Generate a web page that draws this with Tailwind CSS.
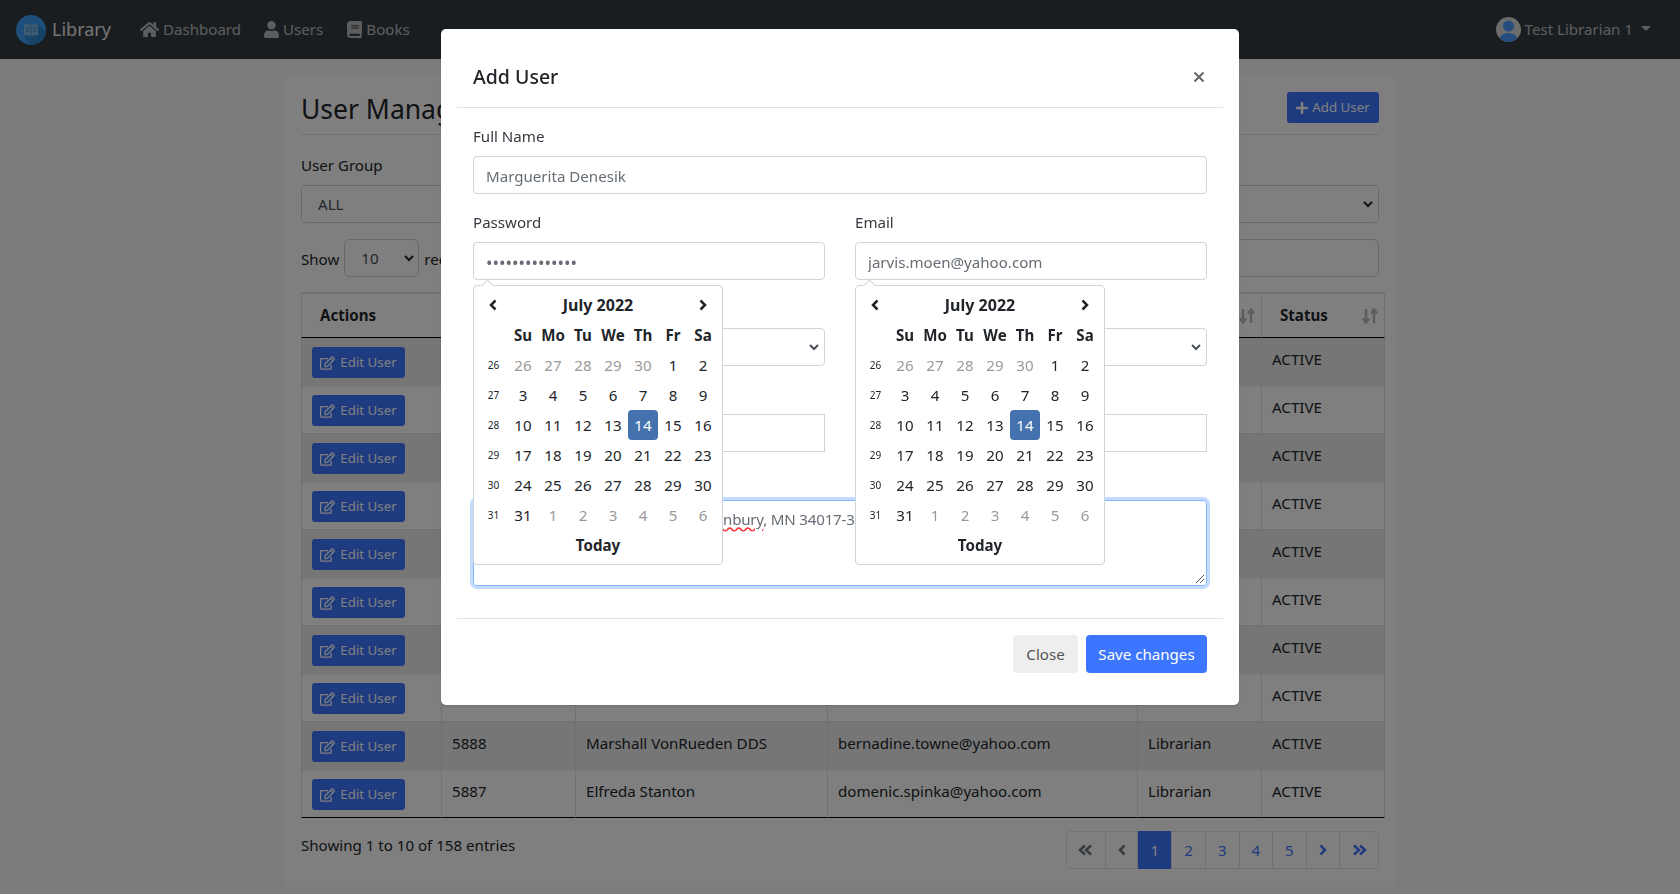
<!DOCTYPE html>
<html lang="en">
<head>
  <meta charset="UTF-8" />
  <title>Library - User Management</title>
  <meta name="viewport" content="width=device-width, initial-scale=1" />
  <script src="https://cdn.jsdelivr.net/npm/@tailwindcss/browser@4"></script>
</head>
<body class="h-screen overflow-hidden bg-[#f8f9fa] text-[#212529] font-['Noto_Sans',sans-serif] text-[15.1px]">

  <!-- navbar -->
  <nav class="h-[59px] bg-[#343a40] flex items-center pl-4 pr-[29px]">
    <svg class="w-[30px] h-[30px]" viewBox="0 0 30 30">
      <defs><clipPath id="logoClip"><circle cx="15" cy="15" r="15"/></clipPath></defs>
      <circle cx="15" cy="15" r="15" fill="#3a9ff5"/>
      <polygon points="8,21 22,9 34,20 24,34 18,34" fill="#2f86d2" clip-path="url(#logoClip)"/>
      <path d="M8 9.500c2.500-.6 5-.4 7 1 2-1.400 4.500-1.600 7-1v11c-2.500-.6-5-.4-7 1-2-1.400-4.500-1.600-7-1z" fill="#7fb8e8"/>
      <path d="M15 10.500v11M10 12.500h3M10 14.500h3M10 16.500h3M17 12.500h3M17 14.500h3M17 16.500h3" stroke="#3a7fc0" stroke-width="0.8"/>
    </svg>
    <span class="ml-[6px] text-[18px] text-white/90">Library</span>
    <a class="ml-[29px] flex items-center text-white/65">
      <svg class="w-[19px] h-[17px] fill-current" viewBox="0 0 576 512"><path d="M280.37 148.26L96 300.11V464a16 16 0 0 0 16 16l112.06-.29a16 16 0 0 0 15.92-16V368a16 16 0 0 1 16-16h64a16 16 0 0 1 16 16v95.64a16 16 0 0 0 16 16.05L464 480a16 16 0 0 0 16-16V300L295.67 148.26a12.19 12.19 0 0 0-15.3 0zM571.6 251.47L488 182.56V44.05a12 12 0 0 0-12-12h-56a12 12 0 0 0-12 12v72.61L318.47 43a48 48 0 0 0-61 0L4.34 251.47a12 12 0 0 0-1.6 16.9l25.5 31A12 12 0 0 0 45.15 301l235.22-193.74a12.19 12.19 0 0 1 15.3 0L530.9 301a12 12 0 0 0 16.9-1.6l25.5-31a12 12 0 0 0-1.7-16.93z"/></svg>
      <span class="ml-[4px]">Dashboard</span>
    </a>
    <a class="ml-[23px] flex items-center text-white/65">
      <svg class="w-[15px] h-[17px] fill-current" viewBox="0 0 448 512"><path d="M224 256c70.700 0 128-57.300 128-128S294.700 0 224 0 96 57.300 96 128s57.300 128 128 128zm89.600 32h-16.700c-22.200 10.200-46.900 16-72.900 16s-50.600-5.800-72.900-16h-16.700C60.200 288 0 348.200 0 422.400V464c0 26.500 21.500 48 48 48h352c26.500 0 48-21.500 48-48v-41.600c0-74.200-60.200-134.400-134.400-134.400z"/></svg>
      <span class="ml-[4px]">Users</span>
    </a>
    <a class="ml-[24px] flex items-center text-white/65">
      <svg class="w-[15px] h-[17px] fill-current" viewBox="0 0 448 512"><path d="M448 360V24c0-13.300-10.700-24-24-24H96C43 0 0 43 0 96v320c0 53 43 96 96 96h328c13.300 0 24-10.700 24-24v-16c0-7.500-3.500-14.300-8.900-18.700-4.200-15.400-4.200-59.300 0-74.700 5.400-4.300 8.900-11.100 8.900-18.600zM128 134c0-3.300 2.700-6 6-6h212c3.300 0 6 2.700 6 6v20c0 3.300-2.700 6-6 6H134c-3.300 0-6-2.700-6-6v-20zm0 64c0-3.300 2.700-6 6-6h212c3.300 0 6 2.700 6 6v20c0 3.300-2.700 6-6 6H134c-3.300 0-6-2.700-6-6v-20zm253.400 250H96c-17.700 0-32-14.300-32-32 0-17.600 14.400-32 32-32h285.400c-1.900 17.100-1.900 46.900 0 64z"/></svg>
      <span class="ml-[4px]">Books</span>
    </a>
    <div class="ml-auto flex items-center text-white/65">
      <svg class="w-[25px] h-[25px]" viewBox="0 0 25 25">
        <defs><clipPath id="avatarClip"><circle cx="12.500" cy="12.500" r="12.500"/></clipPath></defs>
        <circle cx="12.500" cy="12.500" r="12.500" fill="#d8d8d8"/>
        <circle cx="12.500" cy="9" r="5.500" fill="#4a9dff"/>
        <ellipse cx="12.500" cy="21.500" rx="8.500" ry="5.500" fill="#4a9dff" clip-path="url(#avatarClip)"/>
      </svg>
      <span class="ml-[4px]">Test Librarian 1</span>
      <span class="ml-[8px] mb-[3px] w-0 h-0 border-x-[5px] border-x-transparent border-t-[5px] border-t-current"></span>
    </div>
  </nav>

  <!-- page -->
  <main class="pt-[17px]">
    <section class="mx-auto w-[1110px] h-[811px] bg-white rounded-[5px] px-4 pt-4">
      <div class="flex justify-between items-start h-[43px] border-b border-[#dee2e6]">
        <h1 class="text-[26.500px] leading-[34px]">User Management</h1>
        <button class="h-[31px] w-[92px] bg-[#3d76fe] text-white text-[13.300px] rounded-[3px] flex items-center justify-center gap-[4px]">
          <svg class="w-[12px] h-[14px] fill-current" viewBox="0 0 448 512"><path d="M416 208H272V64c0-17.670-14.330-32-32-32h-32c-17.670 0-32 14.330-32 32v144H32c-17.670 0-32 14.330-32 32v32c0 17.670 14.330 32 32 32h144v144c0 17.670 14.330 32 32 32h32c17.670 0 32-14.330 32-32V304h144c17.670 0 32-14.330 32-32v-32c0-17.670-14.330-32-32-32z"/></svg>
          <span class="pt-[1px]">Add User</span>
        </button>
      </div>
      <label class="block mt-[18px] h-[24px] leading-[24px]">User Group</label>
      <div class="mt-[8px] h-[38px] border border-[#ced4da] rounded-[5px] pl-4 pr-[5px] flex items-center justify-between text-[#495057]">
        <span>ALL</span>
        <svg class="w-[10px] h-[8px]" viewBox="0 0 10 8"><path d="M1 2l4 4 4-4" fill="none" stroke="#212529" stroke-width="2"/></svg>
      </div>
      <div class="mt-4 flex items-center h-[38px]">
        <span class="mt-[2px]">Show</span>
        <div class="ml-[5px] w-[75px] h-[38px] border border-[#ced4da] rounded-[5px] pl-[16px] pr-[4px] flex items-center justify-between text-[#495057]">
          <span>10</span>
          <svg class="w-[10px] h-[8px]" viewBox="0 0 10 8"><path d="M1 2l4 4 4-4" fill="none" stroke="#212529" stroke-width="2"/></svg>
        </div>
        <span class="ml-[5px] mt-[2px]">records per page</span>
        <div class="ml-auto w-[300px] h-[38px] border border-[#ced4da] rounded-[5px]"></div>
      </div>

      <table class="mt-[15px] w-[1084px] table-fixed border-separate border-spacing-0">
        <colgroup>
          <col class="w-[141px]"/><col class="w-[134px]"/><col class="w-[252px]"/><col class="w-[310px]"/><col class="w-[124px]"/><col class="w-[123px]"/>
        </colgroup>
        <thead>
          <tr class="h-[46px] font-bold text-left" id="tableHead"></tr>
        </thead>
        <tbody id="tableBody"></tbody>
      </table>

      <div class="mt-[13px] flex justify-between items-start">
        <span class="mt-[2px] leading-[24px]">Showing 1 to 10 of 158 entries</span>
        <div id="pager" class="flex h-[38px] border border-[#dee2e6] rounded-[5px] text-[#3d76fe]"></div>
      </div>
    </section>
  </main>

  <!-- modal -->
  <div class="fixed inset-0 bg-black/50 flex justify-center items-start">
    <div class="mt-[29px] w-[798px] h-[676px] bg-white rounded-[5px] shadow-sm">
      <div class="mx-4 h-[79px] border-b border-[#dee2e6] flex items-center justify-between pl-4 pr-[18px] pt-[17px]">
        <h2 class="text-[19.500px] font-medium text-[#212529]">Add User</h2>
        <svg class="w-[12px] h-[12px]" viewBox="0 0 12 12"><path d="M1.500 1.500l9 9M10.500 1.500l-9 9" stroke="#666" stroke-width="2"/></svg>
      </div>
      <div class="px-8 pt-4 pb-8 grid grid-cols-2 gap-x-[30px] gap-y-4 text-[#343a40]">
        <div class="col-span-2">
          <label class="block mb-2 h-[24px] leading-[24px]">Full Name</label>
          <input class="w-full h-[38px] border border-[#ced4da] rounded-[4px] px-3 pt-[2px] text-[#666d75] outline-none" value="Marguerita Denesik" />
        </div>
        <div class="relative">
          <label class="block mb-2 h-[24px] leading-[24px]">Password</label>
          <input type="password" class="w-full h-[38px] border border-[#ced4da] rounded-[4px] px-3 pt-[2px] text-[17.300px] text-[#666d75] outline-none" value="abcdefghijklmn" />
          <div data-cal></div>
        </div>
        <div class="relative">
          <label class="block mb-2 h-[24px] leading-[24px]">Email</label>
          <input class="w-full h-[38px] border border-[#ced4da] rounded-[4px] px-3 pt-[2px] text-[#666d75] outline-none" value="jarvis.moen@yahoo.com" />
          <div data-cal></div>
        </div>
        <div class="pt-[32px]">
          <div class="h-[38px] border border-[#ced4da] rounded-[4px] pr-[5px] flex items-center justify-end">
            <svg class="w-[10px] h-[8px]" viewBox="0 0 10 8"><path d="M1 2l4 4 4-4" fill="none" stroke="#495057" stroke-width="2"/></svg>
          </div>
        </div>
        <div class="pt-[32px]">
          <div class="h-[38px] border border-[#ced4da] rounded-[4px] pr-[5px] flex items-center justify-end">
            <svg class="w-[10px] h-[8px]" viewBox="0 0 10 8"><path d="M1 2l4 4 4-4" fill="none" stroke="#495057" stroke-width="2"/></svg>
          </div>
        </div>
        <div class="pt-[32px]">
          <div class="h-[38px] border border-[#ced4da]"></div>
        </div>
        <div class="pt-[32px]">
          <div class="h-[38px] border border-[#ced4da]"></div>
        </div>
        <div class="col-span-2 pt-[32px]">
          <div class="relative h-[86px] border border-[#86b7fe] rounded-[4px] ring-[3px] ring-[#0d6efd]/25 pl-[249px] py-[6px] text-[#666d75] leading-[24px] whitespace-nowrap overflow-hidden tracking-[-0.2px]">
            <span class="underline decoration-wavy decoration-red-500">nbury</span>, MN 34017-3
            <svg class="absolute right-[1px] bottom-[1px] w-[10px] h-[10px]" viewBox="0 0 10 10"><path d="M1 9l8-8M5 9l4-4" stroke="#555" stroke-width="1"/></svg>
          </div>
        </div>
      </div>
      <div class="mx-4 border-t border-[#dee2e6] pt-4 px-4 flex justify-end gap-2">
        <button class="h-[38px] w-[65px] bg-[#eeeeee] text-[#555] rounded-[4px]">Close</button>
        <button class="h-[38px] w-[121px] bg-[#3d76fe] text-white rounded-[4px]">Save changes</button>
      </div>
    </div>
  </div>

<script>
// table rows, the middle headers sit behind the modal
const heads = ['Actions', '', '', '', '', 'Status'];
const sortIcon = '<svg class="absolute right-[6px] top-[14px] w-[16px] h-[16px]" viewBox="0 0 16 16"><path d="M4 1v13M1 10.500l3 4 3-4M12 15V2M9 5.500l3-4 3 4" fill="none" stroke="#bbb" stroke-width="2.500"/></svg>';
document.getElementById('tableHead').innerHTML = heads.map((h, i) =>
  '<th class="relative pl-[18px] border-t-2 border-b border-[#dee2e6] border-b-black ' + (i === 0 ? 'border-l ' : '') + 'border-r">' + h + (i > 0 ? sortIcon : '') + '</th>'
).join('');

const rows = [];
for (let i = 0; i < 8; i++) rows.push(['', '', '', '', 'ACTIVE']);
rows.push(['5888', 'Marshall VonRueden DDS', 'bernadine.towne@yahoo.com', 'Librarian', 'ACTIVE']);
rows.push(['5887', 'Elfreda Stanton', 'domenic.spinka@yahoo.com', 'Librarian', 'ACTIVE']);

const editBtn = '<button class="h-[31px] w-[93px] mt-[9px] ml-[10px] bg-[#3d76fe] text-white text-[13.300px] rounded-[3px] flex items-center justify-center gap-[5px]"><svg class="w-[15px] h-[14px] fill-current" viewBox="0 0 576 512"><path d="M402.300 344.900l32-32c5-5 13.700-1.500 13.700 5.700V464c0 26.500-21.500 48-48 48H48c-26.500 0-48-21.500-48-48V112c0-26.500 21.500-48 48-48h273.500c7.100 0 10.700 8.600 5.700 13.700l-32 32c-1.500 1.500-3.500 2.300-5.700 2.300H48v352h352V350.500c0-2.100.8-4.100 2.300-5.600zm156.600-201.800L296.300 405.700l-90.400 10c-26.200 2.900-48.500-19.200-45.600-45.600l10-90.400L432.900 17.100c22.900-22.900 59.900-22.900 82.700 0l43.200 43.200c22.900 22.900 22.900 60 .1 82.800zM460.100 174L402 115.900 216.200 301.800l-7.300 65.300 65.300-7.300L460.100 174zm64.800-79.700l-43.200-43.200c-4.100-4.100-10.800-4.100-14.800 0L436 82l58.100 58.100 30.900-30.900c4-4.200 4-10.800-.1-14.900z"/></svg><span class="pt-[1px]">Edit User</span></button>';

document.getElementById('tableBody').innerHTML = rows.map((r, i) => {
  const last = i === rows.length - 1;
  const shade = i % 2 === 0 ? 'bg-black/[.07] ' : '';
  const bottom = last ? 'border-b-black ' : '';
  return '<tr class="h-[48px]"><td class="align-top border-l border-b border-r border-[#dee2e6] ' + bottom + shade + '">' + editBtn + '</td>' +
    r.map(c => '<td class="align-top pl-[10px] pt-[10px] border-b border-r border-[#dee2e6] ' + bottom + shade + '">' + c + '</td>').join('') + '</tr>';
}).join('');

// pager
const dbl = (d, c) => '<svg class="w-[15px] h-[12px]" viewBox="0 0 15 12"><path d="' + d + '" fill="none" stroke="' + c + '" stroke-width="2.500"/></svg>';
const sgl = (d, c) => '<svg class="w-[8px] h-[12px]" viewBox="0 0 8 12"><path d="' + d + '" fill="none" stroke="' + c + '" stroke-width="2.500"/></svg>';
const pages = [
  [39, dbl('M7 1.500L2 6l5 4.500M13 1.500L8 6l5 4.500', '#6c757d')],
  [32.700, sgl('M6.500 1.500L2 6l4.500 4.500', '#6c757d')],
  [34, '1', true], [33.700, '2'], [33.600, '3'], [33.400, '4'], [33.600, '5'],
  [33.400, sgl('M1.500 1.500L6 6l-4.500 4.500', '#3d76fe')],
  [38, dbl('M2 1.500L7 6l-5 4.500M8 1.500L13 6l-5 4.500', '#3d76fe')]
];
document.getElementById('pager').innerHTML = pages.map((p, i) =>
  '<div style="width:' + p[0] + 'px" class="flex items-center justify-center ' + (i < pages.length - 1 ? 'border-r border-[#dee2e6] ' : '') + (p[2] ? 'bg-[#3d76fe] text-white -my-px' : '') + '">' + p[1] + '</div>'
).join('');

// calendars
const weeks = [
  [26, ['26','27','28','29','30','1','2'], 5],
  [27, ['3','4','5','6','7','8','9'], 0],
  [28, ['10','11','12','13','14','15','16'], 0],
  [29, ['17','18','19','20','21','22','23'], 0],
  [30, ['24','25','26','27','28','29','30'], 0],
  [31, ['31','1','2','3','4','5','6'], -1]
];
const cell = 'w-[30px] h-[30px] flex items-center justify-center';
const calHtml =
  '<div class="absolute left-0 top-full mt-[5px] z-10 w-[250px] h-[280px] bg-white border border-[#ced4da] rounded-[4px] p-[4px] text-[#212529]">' +
    '<span class="absolute -top-[5px] left-[9px] w-[9px] h-[9px] rotate-45 bg-white border-l border-t border-[#ced4da]"></span>' +
    '<div class="relative grid grid-cols-8 font-semibold">' +
      '<div class="' + cell + '"><svg class="w-[8px] h-[12px]" viewBox="0 0 8 12"><path d="M6.500 1.500L2 6l4.500 4.500" fill="none" stroke="#212529" stroke-width="2.500"/></svg></div>' +
      '<div class="col-span-6 h-[30px] flex items-center justify-center font-bold text-[16px]">July 2022</div>' +
      '<div class="' + cell + '"><svg class="w-[8px] h-[12px]" viewBox="0 0 8 12"><path d="M1.500 1.500L6 6l-4.500 4.500" fill="none" stroke="#212529" stroke-width="2.500"/></svg></div>' +
      '<div class="' + cell + '"></div>' +
      ['Su','Mo','Tu','We','Th','Fr','Sa'].map(d => '<div class="' + cell + ' font-bold">' + d + '</div>').join('') +
      weeks.map(w => {
        const days = w[1].map((d, i) => {
          const muted = (w[2] === 5 && i < 5) || (w[2] === -1 && i > 0);
          const today = d === '14';
          return '<div class="' + cell + ' font-normal ' + (muted ? 'text-[#999999] ' : '') + (today ? 'bg-[#4472ae] text-white rounded-[4px]' : '') + '">' + d + '</div>';
        }).join('');
        return '<div class="' + cell + ' font-normal text-[10px] pl-[1px]">' + w[0] + '</div>' + days;
      }).join('') +
      '<div class="col-span-8 h-[30px] flex items-center justify-center font-bold">Today</div>' +
    '</div>' +
  '</div>';
document.querySelectorAll('[data-cal]').forEach(el => { el.outerHTML = calHtml; });
</script>
</body>
</html>
